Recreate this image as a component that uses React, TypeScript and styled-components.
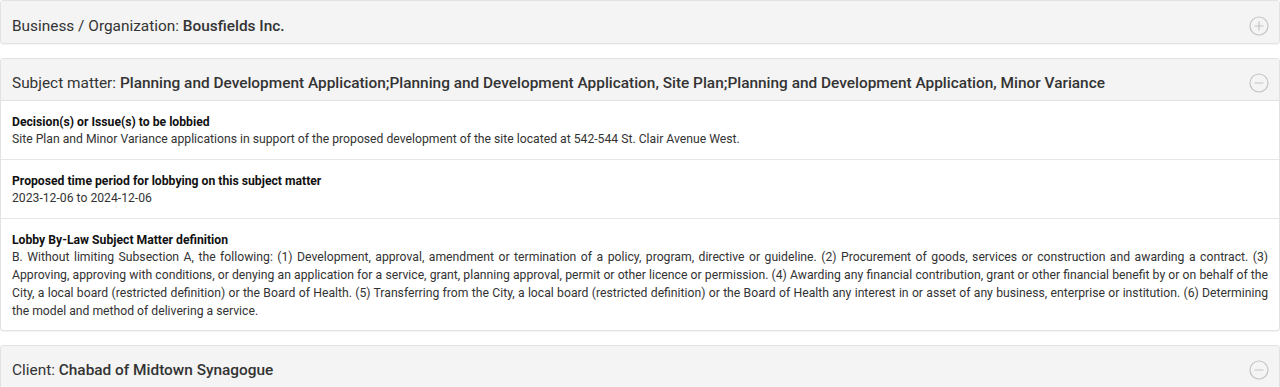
import React from "react";
import styled, { createGlobalStyle } from "styled-components";

const GlobalStyle = createGlobalStyle`
  html, body {
    margin: 0;
    padding: 0;
    background: #fff;
  }
  body {
    font-family: Roboto, "Liberation Sans", Arial, sans-serif;
    color: #333;
  }
`;

const Page = styled.div`
  display: flex;
  flex-direction: column;
  gap: 14px;
`;

const Card = styled.section`
  border: 1px solid #e2e2e2;
  border-radius: 3px;
  background: #fff;
  box-shadow: 0 1px 1px rgba(0, 0, 0, 0.04);
  overflow: hidden;
`;

const Header = styled.div<{ $open?: boolean }>`
  box-sizing: border-box;
  display: flex;
  align-items: center;
  justify-content: space-between;
  height: 42px;
  padding: 7px 10px 0 11px;
  background: #f4f4f4;
  border-bottom: ${(p) => (p.$open ? "1px solid #e2e2e2" : "none")};
  color: #333;
`;

const Title = styled.h3`
  margin: 0;
  font-size: 15.4px;
  font-weight: 400;

  strong {
    font-weight: 500;
  }
`;

const Row = styled.div`
  padding: 13px 11px 11px;
  border-bottom: 1px solid #e6e6e6;

  &:last-child {
    border-bottom: none;
    padding-bottom: 10px;
  }
`;

const Label = styled.div`
  font-size: 12.2px;
  line-height: 16px;
  font-weight: 700;
  color: #111;
`;

const Text = styled.div`
  font-size: 12.2px;
  line-height: 18px;
  color: #333;
  text-align: justify;
`;

const Toggle = ({ open }: { open?: boolean }) => (
  <svg width="20" height="20" viewBox="0 0 20 20" fill="none" stroke="#c4c4c4" strokeWidth="1.2">
    <circle cx="10" cy="10" r="9" />
    <line x1="5.5" y1="10" x2="14.5" y2="10" />
    {!open && <line x1="10" y1="5.5" x2="10" y2="14.5" />}
  </svg>
);

const definition =
  "B. Without limiting Subsection A, the following: (1) Development, approval, amendment or termination of a policy, program, directive or guideline. (2) Procurement of goods, services or construction and awarding a contract. (3) Approving, approving with conditions, or denying an application for a service, grant, planning approval, permit or other licence or permission. (4) Awarding any financial contribution, grant or other financial benefit by or on behalf of the City, a local board (restricted definition) or the Board of Health. (5) Transferring from the City, a local board (restricted definition) or the Board of Health any interest in or asset of any business, enterprise or institution. (6) Determining the model and method of delivering a service.";

const rows = [
  {
    label: "Decision(s) or Issue(s) to be lobbied",
    text: "Site Plan and Minor Variance applications in support of the proposed development of the site located at 542-544 St. Clair Avenue West.",
  },
  {
    label: "Proposed time period for lobbying on this subject matter",
    text: "2023-12-06 to 2024-12-06",
  },
  { label: "Lobby By-Law Subject Matter definition", text: definition },
];

export default function App() {
  return (
    <>
      <GlobalStyle />
      <Page>
        <Card>
          <Header>
            <Title>
              Business / Organization: <strong>Bousfields Inc.</strong>
            </Title>
            <Toggle />
          </Header>
        </Card>
        <Card>
          <Header $open>
            <Title>
              Subject matter:{" "}
              <strong>
                Planning and Development Application;Planning and Development Application, Site
                Plan;Planning and Development Application, Minor Variance
              </strong>
            </Title>
            <Toggle open />
          </Header>
          {rows.map((r) => (
            <Row key={r.label}>
              <Label>{r.label}</Label>
              <Text>{r.text}</Text>
            </Row>
          ))}
        </Card>
        <Card>
          <Header $open>
            <Title>
              Client: <strong>Chabad of Midtown Synagogue</strong>
            </Title>
            <Toggle open />
          </Header>
        </Card>
      </Page>
    </>
  );
}
